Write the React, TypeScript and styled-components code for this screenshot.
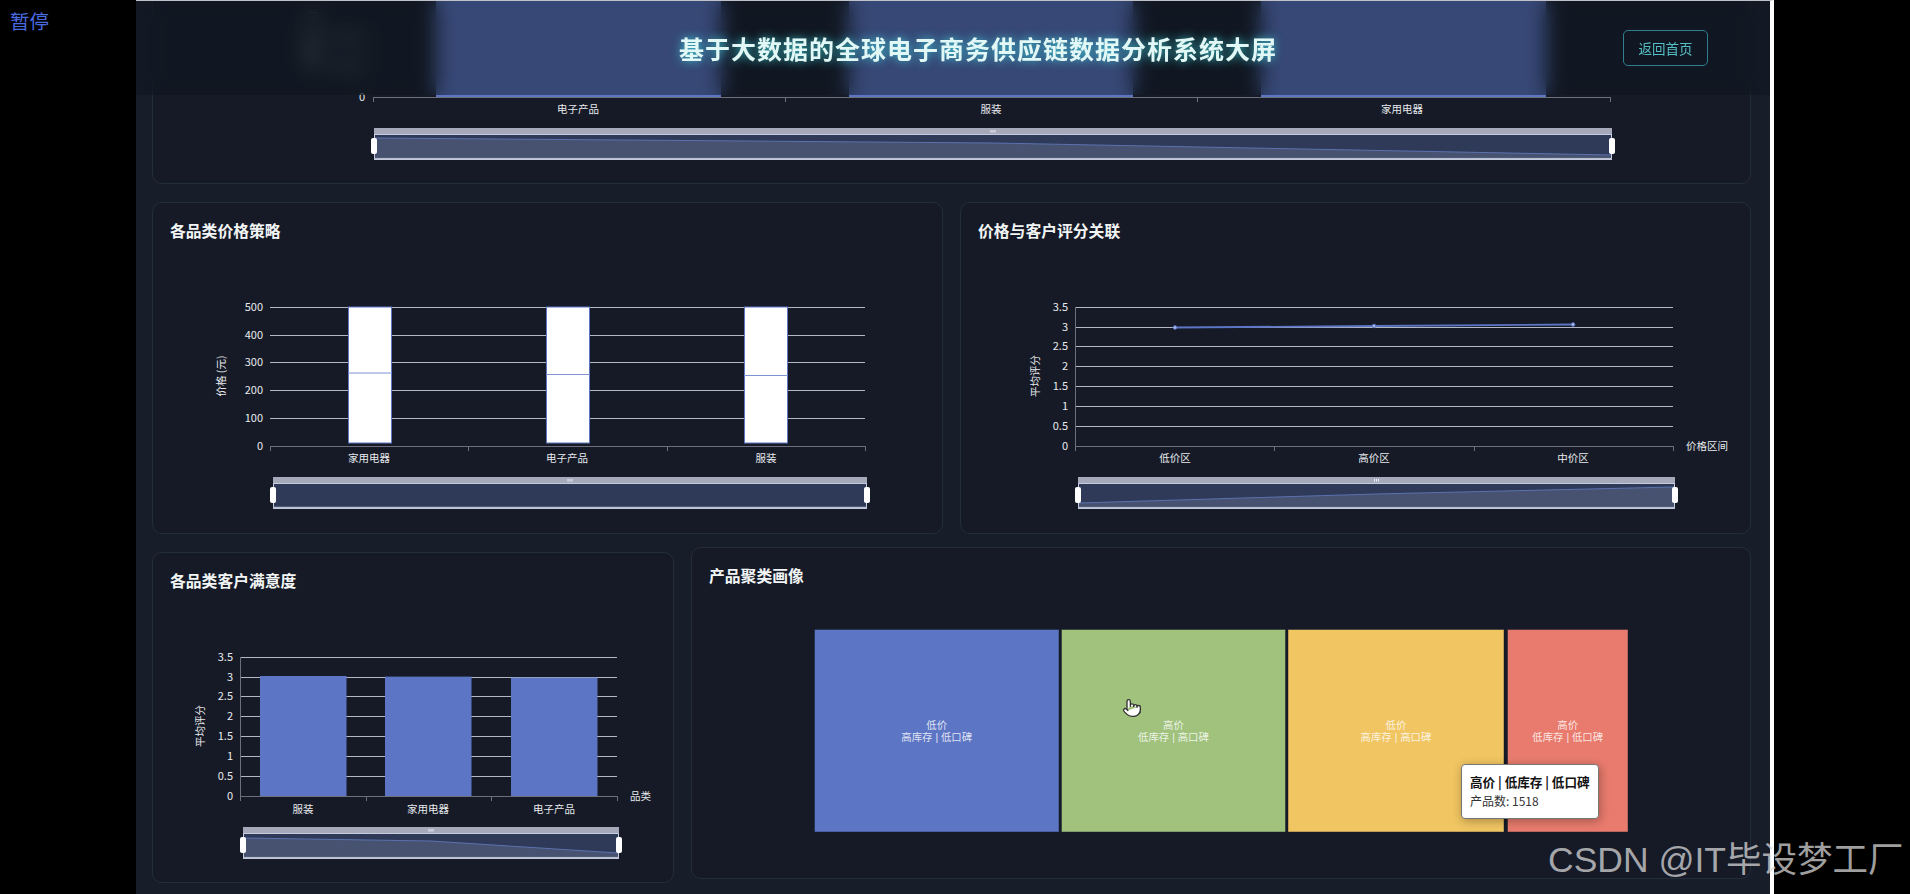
import React from "react";
import styled, { createGlobalStyle } from "styled-components";
import { Pointer } from "lucide-react";

const CJK = `"Noto Sans CJK SC", "Noto Sans", sans-serif`;

const Global = createGlobalStyle`
  html, body { margin: 0; padding: 0; background: #000; overflow: hidden; }
  #root { width: 1910px; height: 894px; }
  * { box-sizing: border-box; }
`;

const Shell = styled.div`
  position: relative;
  display: flex;
  width: 1910px;
  height: 894px;
  background: #000;
  overflow: hidden;
  font-family: ${CJK};
`;
const Side = styled.div`
  width: 136px;
  padding: 6px 0 0 10px;
  font-size: 19.5px;
  line-height: 30px;
  color: #4a6ae0;
`;
const Page = styled.main`
  position: relative;
  width: 1638px;
  height: 894px;
  overflow: hidden;
  background: #181d2a;
  border-top: 1px solid #bfc2c8;
  border-right: 4px solid #fff;
`;
const Header = styled.header`
  position: absolute;
  top: 0;
  left: 0;
  right: 0;
  height: 94px;
  display: flex;
  align-items: center;
  justify-content: flex-end;
  gap: 346px;
  padding: 0 62px 0 0;
  background: rgba(12, 21, 29, 0.465);
  backdrop-filter: blur(10px);
  z-index: 5;
`;
const Title = styled.h1`
  margin: 0;
  font-size: 25px;
  line-height: 30px;
  letter-spacing: 1px;
  font-weight: 700;
  color: #e2f8f6;
  text-shadow: 0 0 10px rgba(64, 215, 225, 0.85);
`;
const BackButton = styled.button`
  width: 85px;
  height: 36px;
  padding: 0;
  background: transparent;
  border: 1px solid #2f7f8e;
  border-radius: 5px;
  color: #55bfc6;
  font-family: ${CJK};
  font-size: 13.5px;
`;
const Content = styled.div`
  display: flex;
  flex-direction: column;
  gap: 18px;
  margin-top: -67px;
  padding: 0 19px 0 16px;
`;
const Row = styled.section<{ $cols: string }>`
  display: grid;
  grid-template-columns: ${(p) => p.$cols};
  column-gap: 17px;
  align-items: start;
`;
const Card = styled.article<{ $height?: number; $lifted?: boolean }>`
  position: relative;
  height: ${(p) => p.$height ?? 332}px;
  padding: 18px 17px 0;
  background: #151a26;
  border: 1px solid #232d3c;
  border-radius: 10px;
  transform: ${(p) => (p.$lifted ? "translateY(-5px)" : "none")};
`;
const CardTitle = styled.h3`
  margin: -1px 0 1px;
  font-size: 15.8px;
  line-height: 22px;
  font-weight: 700;
  color: #f2f5f5;
`;
const Chart = styled.svg`
  display: block;
  overflow: visible;
  font-family: ${CJK};
`;
const CellLabel = styled.text`
  font-family: "Liberation Sans", "Noto Sans CJK SC", sans-serif;
  font-size: 10.4px;
  fill: rgba(255, 255, 255, 0.82);
  text-anchor: middle;
`;
const TooltipBox = styled.div`
  position: absolute;
  left: 769px;
  top: 216px;
  width: 138px;
  height: 55px;
  padding: 7px 8px;
  background: #fff;
  border: 1px solid #777;
  border-radius: 4px;
  box-shadow: 1px 2px 10px rgba(0, 0, 0, 0.3);
  color: #333;
  font-size: 12px;
  line-height: 19px;
  white-space: nowrap;
`;
const TooltipHead = styled.div`
  font-size: 12.6px;
  font-weight: 700;
  color: #111;
`;
const Cursor = styled.div`
  position: absolute;
  left: 1122px;
  top: 698px;
  z-index: 6;
  line-height: 0;
`;
const Watermark = styled.div`
  position: absolute;
  left: 1548px;
  top: 838px;
  z-index: 7;
  font-family: "Liberation Sans", "Noto Sans CJK SC", sans-serif;
  font-size: 35.5px;
  line-height: 44px;
  white-space: nowrap;
  color: rgba(222, 222, 222, 0.72);
`;

const AXIS = "#6e7079";
const GRID = "#b4b8c2";
const TICK = "#e8eaee";
const BLUE = "#5c75c4";

type Pt = [number, number];

function Zoom({ x1, x2, y, area }: { x1: number; x2: number; y: number; area?: Pt[] }) {
  const mid = (x1 + x2) / 2;
  const path = area ? area.map((p) => p.join(",")).join(" ") : "";
  return (
    <g>
      <rect x={x1} y={y} width={x2 - x1} height={6} fill="#a5a9ba" />
      {[-2, 0, 2].map((d) => (
        <rect key={d} x={mid + d - 0.5} y={y + 2} width={1} height={2.6} fill="#eceef5" />
      ))}
      <rect x={x1 + 1} y={y + 6} width={x2 - x1 - 2} height={25} fill="#2e3a57" />
      {area && (
        <>
          <polygon points={`${x1 + 1},${y + 29} ${path} ${x2 - 1},${y + 29}`} fill="#475270" />
          <polyline points={path} fill="none" stroke="#5b72ae" strokeWidth={1} />
        </>
      )}
      <rect x={x1 + 0.5} y={y + 6.5} width={x2 - x1 - 1} height={25} fill="none" stroke="#c4ccde" strokeWidth={1} />
      <line x1={x1} x2={x2} y1={y + 30.5} y2={y + 30.5} stroke="#b8bfd2" strokeWidth={1.4} />
      <rect x={x1 - 3} y={y + 10} width={6} height={16} rx={2} fill="#fff" />
      <rect x={x2 - 3} y={y + 10} width={6} height={16} rx={2} fill="#fff" />
    </g>
  );
}

function Axes({ x1, x2, y0, ticks, labels, labelY, yLabels, yx, name, nameX, tickFill = TICK }: {
  x1: number; x2: number; y0: number; ticks: number[]; labels: { x: number; t: string }[];
  labelY: number; yLabels: { y: number; t: string; faint?: boolean }[]; yx: number; name?: string; nameX?: number; tickFill?: string;
}) {
  return (
    <g>
      {yLabels.map((l) => (
        <text key={l.t} x={yx} y={l.y + 4} fontSize={11} fill={l.faint ? "rgba(232,234,238,.5)" : tickFill} textAnchor="end">{l.t}</text>
      ))}
      <line x1={x1} x2={x2} y1={y0 + 0.5} y2={y0 + 0.5} stroke={AXIS} />
      {ticks.map((t) => (
        <line key={t} x1={t + 0.5} x2={t + 0.5} y1={y0} y2={y0 + 5} stroke={AXIS} />
      ))}
      {labels.map((l) => (
        <text key={l.t} x={l.x} y={labelY} fontSize={10.5} fill={TICK} textAnchor="middle">{l.t}</text>
      ))}
      {name && <text x={nameX} y={y0 + 4} fontSize={10.5} fill={TICK}>{name}</text>}
    </g>
  );
}

function Grid({ x1, x2, ys }: { x1: number; x2: number; ys: number[] }) {
  return (
    <g>
      {ys.map((y) => (
        <line key={y} x1={x1} x2={x2} y1={y + 0.5} y2={y + 0.5} stroke={GRID} strokeWidth={1.15} />
      ))}
    </g>
  );
}

function Rotated({ x, y, t }: { x: number; y: number; t: string }) {
  return (
    <text x={x} y={y} fontSize={10.5} fill={TICK} textAnchor="middle" transform={`rotate(-90 ${x} ${y})`}>{t}</text>
  );
}

function TopChart() {
  const ox = 169, oy = -47, w = 1580, h = 230;
  return (
    <Chart width={w} height={h} viewBox={`${ox} ${oy} ${w} ${h}`}>
      <text x={316} y={40} fontSize={12} fill="rgba(232,234,238,.55)" textAnchor="middle" transform="rotate(-90 316 40)">销售额 (元)</text>
      {[
        [435, 285],
        [848, 284],
        [1260, 285],
      ].map(([x, bw]) => (
        <rect key={x} x={x} y={-40} width={bw} height={137} fill={BLUE} />
      ))}
      <Axes
        x1={372} x2={1609} y0={97}
        ticks={[372, 784, 1196, 1609]}
        labels={[{ x: 577, t: "电子产品" }, { x: 990, t: "服装" }, { x: 1401, t: "家用电器" }]}
        labelY={113}
        yLabels={[
          { y: 97, t: "0" },
          { y: 66, t: "200000", faint: true },
          { y: 38, t: "400000", faint: true },
        ]}
        yx={364}
      />
      <Zoom x1={373} x2={1611} y={128} area={[[374, 138], [992, 143], [1610, 155]]} />
    </Chart>
  );
}

const boxYs = [308, 336, 363, 391, 419];
function PriceChart() {
  const ox = 170, oy = 244, w = 755, h = 280;
  const boxes = [
    { x: 348, m: 374 },
    { x: 546, m: 375.5 },
    { x: 744, m: 376.5 },
  ];
  return (
    <Chart width={w} height={h} viewBox={`${ox} ${oy} ${w} ${h}`}>
      <Grid x1={270} x2={865} ys={boxYs} />
      <Axes
        x1={270} x2={865} y0={447}
        ticks={[270, 468, 667, 865]}
        labels={[{ x: 369, t: "家用电器" }, { x: 567, t: "电子产品" }, { x: 766, t: "服装" }]}
        labelY={463}
        yLabels={[{ y: 308, t: "500" }, { y: 336, t: "400" }, { y: 363, t: "300" }, { y: 391, t: "200" }, { y: 419, t: "100" }, { y: 447, t: "0" }]}
        yx={263}
      />
      <Rotated x={225} y={377} t="价格 (元)" />
      {boxes.map((b) => (
        <g key={b.x}>
          <rect x={b.x + 0.5} y={308} width={43} height={136} fill="#fff" stroke={BLUE} />
          <line x1={b.x} x2={b.x + 44} y1={b.m} y2={b.m} stroke="#7f93d4" strokeWidth={1.2} />
        </g>
      ))}
      <Zoom x1={273} x2={867} y={478} />
    </Chart>
  );
}

function RatingLine() {
  const ox = 978, oy = 244, w = 755, h = 280;
  const ys = [308, 328, 347, 367, 387, 407, 427];
  const pts: Pt[] = [[1175, 328.5], [1374, 327], [1573, 325.5]];
  return (
    <Chart width={w} height={h} viewBox={`${ox} ${oy} ${w} ${h}`}>
      <Grid x1={1075} x2={1673} ys={ys} />
      <line x1={1075.5} x2={1075.5} y1={308} y2={447} stroke={AXIS} />
      <Axes
        x1={1075} x2={1673} y0={447}
        ticks={[1075, 1274, 1474, 1673]}
        labels={[{ x: 1175, t: "低价区" }, { x: 1374, t: "高价区" }, { x: 1573, t: "中价区" }]}
        labelY={463}
        yLabels={["3.5", "3", "2.5", "2", "1.5", "1", "0.5"].map((t, i) => ({ y: ys[i], t })).concat({ y: 447, t: "0" })}
        yx={1068}
        name="价格区间"
        nameX={1686}
      />
      <Rotated x={1039} y={377} t="平均评分" />
      <polyline points={pts.map((p) => p.join(",")).join(" ")} fill="none" stroke={BLUE} strokeWidth={1.8} />
      {pts.map((p) => (
        <circle key={p[0]} cx={p[0]} cy={p[1]} r={1.8} fill="#aab8e6" stroke={BLUE} />
      ))}
      <Zoom x1={1078} x2={1675} y={478} area={[[1079, 504], [1376, 495], [1674, 488]]} />
    </Chart>
  );
}

function SatisfactionChart() {
  const ox = 170, oy = 593, w = 490, h = 280;
  const ys = [657, 677, 696, 716, 736, 756, 776];
  return (
    <Chart width={w} height={h} viewBox={`${ox} ${oy} ${w} ${h}`}>
      <Grid x1={240} x2={617} ys={ys} />
      <line x1={240.5} x2={240.5} y1={657} y2={796} stroke={AXIS} />
      {[[260, 676], [385, 676.6], [511, 677.6]].map(([x, y]) => (
        <rect key={x} x={x} y={y} width={86.5} height={796 - y} fill={BLUE} />
      ))}
      <Axes
        x1={240} x2={617} y0={796}
        ticks={[240, 366, 491, 617]}
        labels={[{ x: 303, t: "服装" }, { x: 428, t: "家用电器" }, { x: 554, t: "电子产品" }]}
        labelY={813}
        yLabels={["3.5", "3", "2.5", "2", "1.5", "1", "0.5"].map((t, i) => ({ y: ys[i], t })).concat({ y: 796, t: "0" })}
        yx={233}
        name="品类"
        nameX={630}
      />
      <Rotated x={204} y={726} t="平均评分" />
      <Zoom x1={243} x2={619} y={827} area={[[244, 838], [431, 841], [618, 853]]} />
    </Chart>
  );
}

const cells = [
  { x: 814.5, w: 244.5, c: "#5c75c4", a: "低价", b: "高库存 | 低口碑" },
  { x: 1061.5, w: 224, c: "#a0c27d", a: "高价", b: "低库存 | 高口碑" },
  { x: 1288, w: 216, c: "#f0c562", a: "低价", b: "高库存 | 高口碑" },
  { x: 1507.5, w: 120.5, c: "#e87b6d", a: "高价", b: "低库存 | 低口碑" },
];

function Treemap() {
  const ox = 709, oy = 593, w = 1025, h = 280;
  return (
    <Chart width={w} height={h} viewBox={`${ox} ${oy} ${w} ${h}`}>
      {cells.map((c) => {
        const cx = c.x + c.w / 2;
        return (
          <g key={c.x}>
            <rect x={c.x} y={634.5} width={c.w} height={202.5} fill={c.c} stroke="rgba(20,26,40,.45)" />
            <CellLabel x={cx} y={734}>{c.a}</CellLabel>
            <CellLabel x={cx} y={746.2}>{c.b}</CellLabel>
          </g>
        );
      })}
    </Chart>
  );
}

export default function App() {
  return (
    <Shell>
      <Global />
      <Side>暂停</Side>
      <Page>
        <Header>
          <Title>基于大数据的全球电子商务供应链数据分析系统大屏</Title>
          <BackButton>返回首页</BackButton>
        </Header>
        <Content>
          <Card $height={250}>
            <TopChart />
          </Card>
          <Row $cols="791px 791px">
            <Card>
              <CardTitle>各品类价格策略</CardTitle>
              <PriceChart />
            </Card>
            <Card>
              <CardTitle>价格与客户评分关联</CardTitle>
              <RatingLine />
            </Card>
          </Row>
          <Row $cols="522px 1060px">
            <Card $height={331}>
              <CardTitle>各品类客户满意度</CardTitle>
              <SatisfactionChart />
            </Card>
            <Card $height={332} $lifted>
              <CardTitle>产品聚类画像</CardTitle>
              <Treemap />
              <TooltipBox>
                <TooltipHead>高价 | 低库存 | 低口碑</TooltipHead>
                产品数: 1518
              </TooltipBox>
            </Card>
          </Row>
        </Content>
      </Page>
      <Cursor>
        <Pointer size={20} fill="#fff" stroke="#333" strokeWidth={1.6} />
      </Cursor>
      <Watermark>CSDN @IT毕设梦工厂</Watermark>
    </Shell>
  );
}
